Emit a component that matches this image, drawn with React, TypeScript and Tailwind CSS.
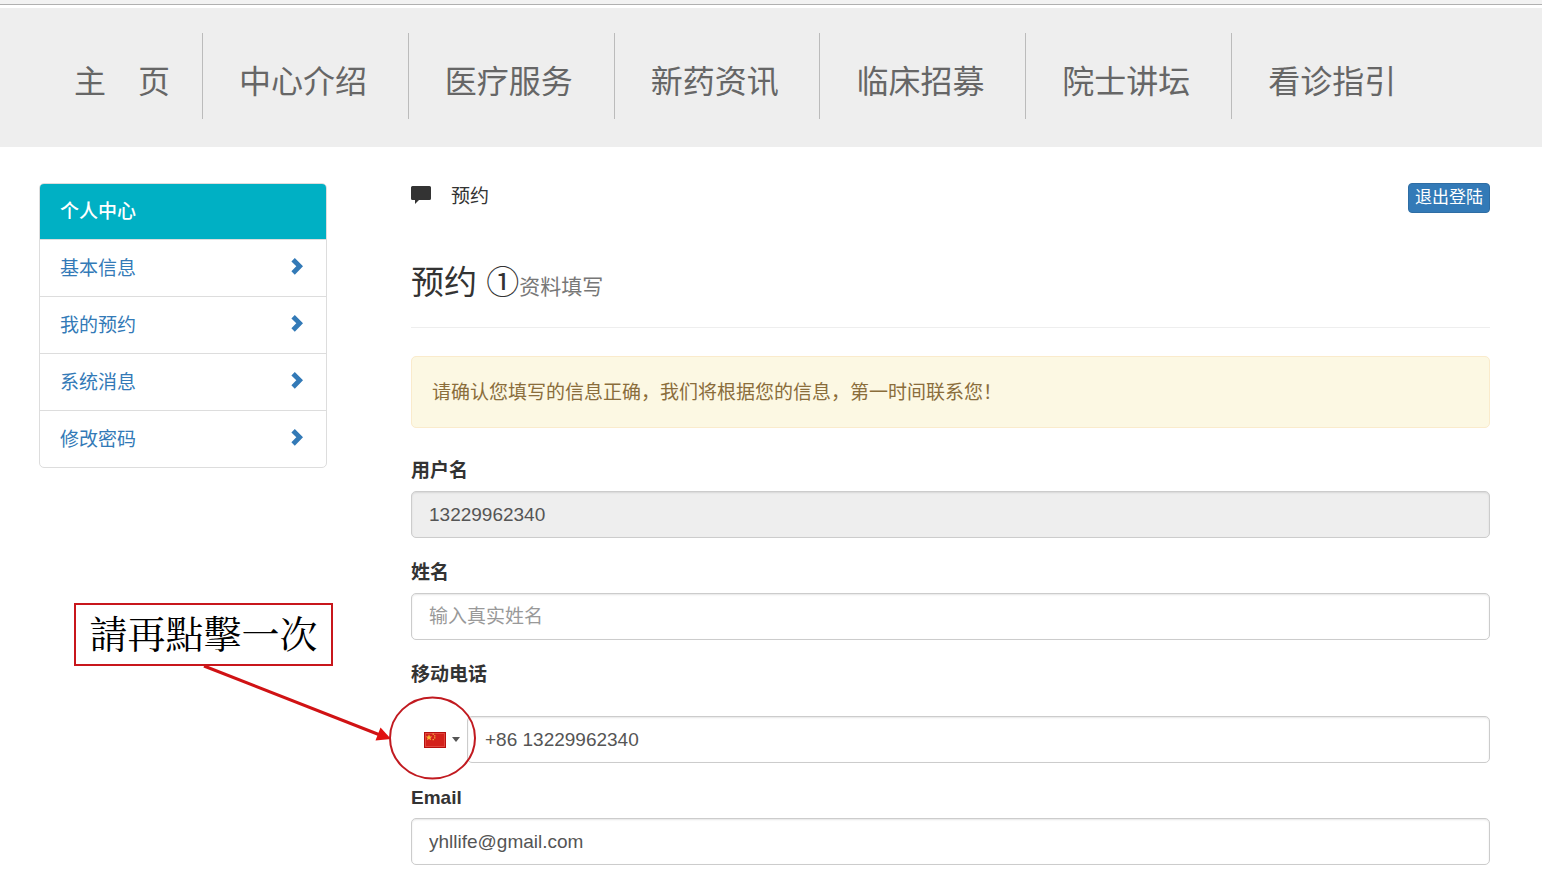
import React, { useState } from 'react';

const navItems = ['中心介绍', '医疗服务', '新药资讯', '临床招募', '院士讲坛', '看诊指引'];
const menuItems = ['基本信息', '我的预约', '系统消息', '修改密码'];

const inputClass =
  'block h-[47px] w-full min-w-0 rounded-[5px] border border-[#ccc] px-[17px] text-[19px] text-[#555] placeholder:text-[#999] shadow-[inset_0_1px_2px_rgba(0,0,0,0.1)] outline-none focus:border-[#66afe9]';
const labelClass = 'mb-[7px] block text-[19px] leading-[27px] font-bold text-[#333]';

const ChevronIcon: React.FC = () => (
  <svg viewBox="0 0 12 17" className="mb-[6px] h-[17px] w-3" fill="#337ab7" aria-hidden="true">
    <path d="M3.8 0 12 8.350 3.800 16.700.400 13.300 5.300 8.350.400 3.400z" />
  </svg>
);

const CommentIcon: React.FC = () => (
  <svg viewBox="0 0 20 18" className="mb-1 h-[18px] w-5" fill="#333" aria-hidden="true">
    <path d="M1.500 0h17A1.500 1.500 0 0 1 20 1.500v11a1.500 1.500 0 0 1-1.500 1.500H8l-4 4v-4H1.500A1.500 1.500 0 0 1 0 12.500v-11A1.500 1.500 0 0 1 1.500 0z" />
  </svg>
);

const FlagIcon: React.FC = () => (
  <svg viewBox="0 0 22 16" className="h-4 w-[22px]" aria-hidden="true">
    <rect width="22" height="16" fill="#b5100f" />
    <rect x="1" y="1" width="20" height="14" fill="#e2453c" />
    <rect x="2" y="2" width="18" height="12" fill="#d3211b" />
    <path d="M5 2.200l.9 2.200 2.400.1-1.900 1.500.7 2.300L5 7 2.900 8.300 3.600 6 1.700 4.500l2.400-.1z" fill="#f7b733" />
    <path d="M8.500 1.500h1.500v1.300H8.500zM10 3.200h1.400v1.300H10zM10 5.300h1.400v1.300H10zM8.500 7h1.500v1.300H8.500z" fill="#f2a23a" />
  </svg>
);

const Navbar: React.FC = () => (
  <header>
    <div className="mb-[3px] h-[5px] border-b border-[#b0b0b0] bg-[#f2f2f2]" />
    <nav className="flex h-[139px] bg-[#eee] pt-[25px] pr-[105px] pl-9 text-[32px] leading-[48px] whitespace-nowrap text-[#666]">
      <a href="#home" className="h-[86px] w-[167px] shrink-0 border-r border-[#bbb] pt-[25px] pl-[38px]">
        主　页
      </a>
      {navItems.map((item) => (
        <a
          key={item}
          href={`#${item}`}
          className="h-[86px] flex-1 border-r border-[#bbb] pt-[25px] pl-9 last:border-r-0"
        >
          {item}
        </a>
      ))}
    </nav>
  </header>
);

const Sidebar: React.FC = () => (
  <aside className="w-[288px] shrink-0 self-start overflow-hidden rounded-[5px] border border-[#ddd] text-[19px]">
    <h2 className="flex h-[55px] items-center bg-[#00b0c4] px-5 pt-[2px] font-medium text-white">个人中心</h2>
    {menuItems.map((item) => (
      <a
        key={item}
        href={`#${item}`}
        className="flex h-[57px] items-center justify-between border-t border-[#ddd] pt-[2px] pr-[23px] pl-5 text-[#337ab7]"
      >
        {item}
        <ChevronIcon />
      </a>
    ))}
  </aside>
);

const BookingForm: React.FC = () => {
  const [name, setName] = useState('');
  const [phone, setPhone] = useState('+86 13229962340');
  const [email, setEmail] = useState('yhllife@gmail.com');

  return (
    <form className="flex flex-col gap-[21px]">
      <div>
        <label htmlFor="username" className={labelClass}>用户名</label>
        <input id="username" className={`${inputClass} bg-[#eee]`} value="13229962340" readOnly />
      </div>
      <div>
        <label htmlFor="name" className={labelClass}>姓名</label>
        <input
          id="name"
          className={inputClass}
          placeholder="输入真实姓名"
          value={name}
          onChange={(e) => setName(e.target.value)}
        />
      </div>
      <div>
        <label htmlFor="phone" className={labelClass}>移动电话</label>
        <div className="flex pt-[21px]">
          <button
            type="button"
            aria-label="国家代码"
            aria-haspopup="listbox"
            className="flex h-[47px] w-14 shrink-0 items-center gap-[6px] pl-[13px]"
          >
            <FlagIcon />
            <svg viewBox="0 0 8 5" className="h-[5px] w-2" fill="#555" aria-hidden="true">
              <path d="M0 0h8L4 5z" />
            </svg>
          </button>
          <input
            id="phone"
            type="tel"
            className={inputClass}
            value={phone}
            onChange={(e) => setPhone(e.target.value)}
          />
        </div>
      </div>
      <div>
        <label htmlFor="email" className={labelClass}>Email</label>
        <input
          id="email"
          type="email"
          className={inputClass}
          value={email}
          onChange={(e) => setEmail(e.target.value)}
        />
      </div>
    </form>
  );
};

// Red callout that points at the country picker
const Callout: React.FC = () => (
  <>
    <svg viewBox="0 0 300 130" className="pointer-events-none absolute top-[655px] left-[190px] h-[130px] w-[300px]" aria-hidden="true">
      <path d="M14 11 190 80" stroke="#d01214" strokeWidth="3" fill="none" />
      <path d="M201 84 185.500 85.500 190.500 72.500z" fill="#e01010" />
      <ellipse cx="242.500" cy="83" rx="42.500" ry="40.500" stroke="#c11a20" strokeWidth="2" fill="none" />
    </svg>
    <div className="absolute top-[603px] left-[74px] flex h-[63px] w-[259px] items-center justify-center border-2 border-[#c8171c] bg-white font-['Liberation_Serif','Noto_Serif_CJK_TC','Noto_Sans_CJK_TC',serif] text-[38px] leading-[56px] whitespace-nowrap text-black">
      請再點擊一次
    </div>
  </>
);

export default function App() {
  return (
    <div lang="zh-CN" className="relative bg-white font-['Liberation_Sans','Noto_Sans_CJK_SC',sans-serif] text-[#333]">
      <Navbar />
      <div className="flex gap-[84px] pt-9 pr-13 pb-2 pl-[39px]">
        <Sidebar />
        <main className="min-w-0 flex-1">
          <div className="flex h-[30px] items-center justify-between text-[19px]">
            <div className="flex items-center gap-5 pb-[2px]">
              <CommentIcon />
              <span>预约</span>
            </div>
            <button type="button" className="h-[30px] rounded-[4px] border border-[#2e6da4] bg-[#337ab7] px-[6px] text-[17px] leading-[26px] text-white">
              退出登陆
            </button>
          </div>

          <h1 className="mt-[52px] border-b border-[#eee] pb-[22px] text-[33px] leading-9 font-normal">
            预约 ①<small className="text-[21px] text-[#777]">资料填写</small>
          </h1>

          <div role="alert" className="mt-7 mb-[29px] flex min-h-[72px] items-center rounded-[5px] border border-[#faebcc] bg-[#fcf8e3] px-5 pt-[2px] text-[19px] text-[#8a6d3b]">
            请确认您填写的信息正确，我们将根据您的信息，第一时间联系您！
          </div>

          <BookingForm />
        </main>
      </div>
      <Callout />
    </div>
  );
}
